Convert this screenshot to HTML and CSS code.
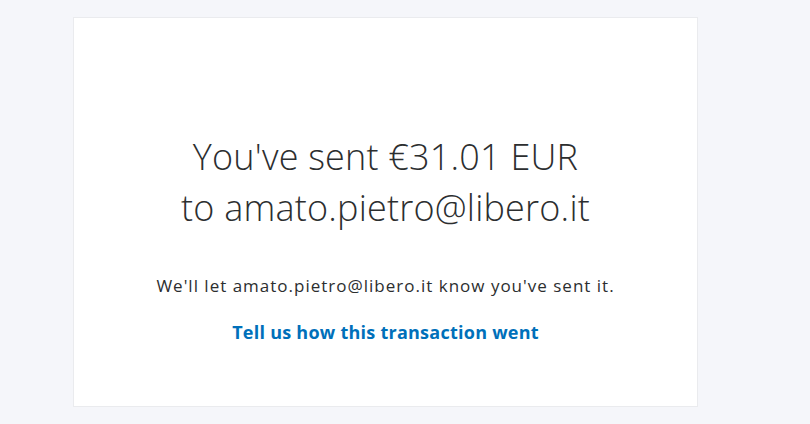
FILE: index.html
```html
<!DOCTYPE html>
<html>
<head>
<meta charset="utf-8">
<link rel="stylesheet" href="styles.css">
</head>
<body>
<div class="page">
  <main class="card">
    <h1 class="title">You've sent €31.01 EUR<br>to amato.pietro@libero.it</h1>
    <p class="note">We'll let amato.pietro@libero.it know you've sent it.</p>
    <a class="link" href="#">Tell us how this transaction went</a>
  </main>
</div>
</body>
</html>
```

FILE: styles.css
```css
html, body {
  margin: 0;
  padding: 0;
  background: #f5f6fa;
}
.page {
  padding: 17px 0 0 73px;
}
.card {
  box-sizing: border-box;
  width: 625px;
  height: 390px;
  background: #ffffff;
  border: 1px solid #eaebee;
  display: flex;
  flex-direction: column;
  align-items: center;
  padding-top: 113px;
  text-align: center;
}
.title {
  margin: 0;
  font-family: "Open Sans", sans-serif;
  font-weight: 300;
  font-size: 36px;
  line-height: 51px;
  color: #2c2e2f;
  letter-spacing: 0.2px;
}
.note {
  margin: 41px 0 0 0;
  font-family: "Open Sans", sans-serif;
  font-size: 17px;
  line-height: 24px;
  letter-spacing: 1px;
  color: #2c2e2f;
}
.link {
  margin-top: 22px;
  font-family: "Open Sans", sans-serif;
  font-weight: 700;
  font-size: 18px;
  line-height: 24px;
  letter-spacing: 0.25px;
  color: #0070ba;
  text-decoration: none;
}
```
